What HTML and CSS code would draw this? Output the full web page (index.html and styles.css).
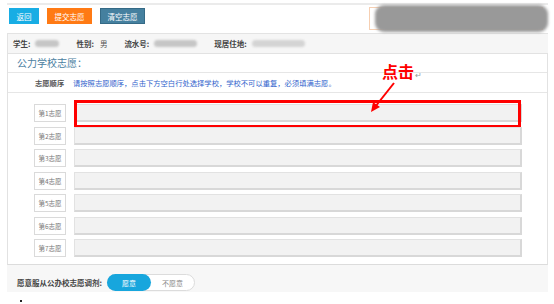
FILE: index.html
```html
<!DOCTYPE html>
<html lang="zh-CN">
<head>
  <meta charset="UTF-8">
  <title>志愿填报</title>
  <link rel="stylesheet" href="styles.css">
</head>
<body>

<div class="page">
  <div class="topline"></div>

  <div class="toolbar">
    <a class="btn btn-back">返回</a>
    <a class="btn btn-submit">提交志愿</a>
    <a class="btn btn-clear">清空志愿</a>
    <div class="school-box">
      <div class="smudge"></div>
    </div>
  </div>

  <div class="info">
    <span class="label">学生:</span><span class="mask mask-name"></span>
    <span class="label gap">性别:</span><span class="value">男</span>
    <span class="label gap">流水号:</span><span class="mask mask-no"></span>
    <span class="label gap">现居住地:</span><span class="mask mask-addr"></span>
  </div>

  <div class="panel">
    <div class="panel-title">公力学校志愿：</div>
    <div class="hint">
      <span class="hint-label">志愿顺序</span>
      <span class="hint-text">请按照志愿顺序，点击下方空白行处选择学校，学校不可以重复，必须填满志愿。</span>
    </div>
    <div class="choices" id="choices">
      <!-- rows filled in below -->
    </div>
  </div>

  <div class="footer">
    <span class="footer-label">愿意服从公办校志愿调剂:</span>
    <div class="toggle">
      <span class="toggle-on">愿意</span>
      <span class="toggle-off">不愿意</span>
    </div>
  </div>
  <div class="dot"></div>
</div>

<!-- screenshot annotation -->
<div class="callout">点击<span class="ret">↵</span></div>
<svg class="arrow" width="40" height="40" viewBox="0 0 40 40">
  <line x1="30" y1="3" x2="11" y2="27" stroke="#f00" stroke-width="2"/>
  <polygon points="7,32 9,22 16,27" fill="#f00"/>
</svg>

<script>
  const rows = document.getElementById("choices");
  for (let i = 1; i <= 7; i++) {
    rows.innerHTML += `
      <div class="choice">
        <span class="choice-no">第${i}志愿</span>
        <div class="choice-input">${i === 1 ? '<div class="highlight"></div>' : ''}</div>
      </div>`;
  }
</script>

</body>
</html>
```

FILE: styles.css
```css
/* General */
body {
  margin: 0;
  background: #fff;
  font-family: "Noto Sans CJK SC", "Noto Sans", sans-serif;
  color: #333;
  position: relative;
}
.page {
  width: 541px;
  margin-left: 7px;
}
.topline {
  height: 2px;
  margin-top: 3px;
  background: #ebebeb;
}

/* Toolbar */
.toolbar {
  display: flex;
  align-items: flex-start;
  height: 28px;
  padding-left: 2px;
}
.btn {
  display: inline-flex;
  align-items: center;
  justify-content: center;
  height: 16px;
  margin-top: 3px;
  margin-right: 8px;
  font-size: 7.5px;
  color: #fff;
  box-sizing: border-box;
}
.btn-back {
  width: 30px;
  background: #18ade4;
}
.btn-submit {
  width: 45px;
  background: #ff7a14;
}
.btn-clear {
  width: 45px;
  background: #45809f;
  border: 1px solid #356a86;
}
.school-box {
  margin-left: auto;
  margin-top: 2px;
  margin-right: 5px;
  width: 172px;
  height: 21px;
  border: 1px solid #f6cfb2;
  position: relative;
}
.smudge {
  position: absolute;
  left: 5px;
  right: -6px;
  top: -3px;
  bottom: -3px;
  background: #999;
  border-radius: 9px;
  filter: blur(1.5px);
}

/* Info row */
.info {
  display: flex;
  align-items: center;
  height: 19px;
  padding-left: 5px;
  border-top: 1px solid #e3e3e3;
  border-left: 1px solid #e3e3e3;
  background: #f6f6f6;
  font-size: 7.5px;
}
.label {
  font-weight: bold;
  color: #444;
}
.gap {
  margin-left: 17px;
}
.value {
  margin-left: 6px;
  color: #555;
}
.mask {
  height: 7px;
  margin-left: 5px;
  background: #c6c6c6;
  border-radius: 4px;
  filter: blur(1px);
}
.mask-name { width: 24px; }
.mask-no { width: 43px; }
.mask-addr { width: 53px; background: #d4d4d4; }

/* Panel */
.panel {
  border: 1px solid #e2e2e2;
  border-bottom-color: #dcdcdc;
  background: #fff;
}
.panel-title {
  height: 18px;
  line-height: 18px;
  padding-left: 9px;
  font-size: 10px;
  color: #4b7ea1;
  border-bottom: 1px solid #e6e6e6;
}
.hint {
  display: flex;
  align-items: center;
  height: 19px;
  border-bottom: 1px solid #e6e6e6;
  font-size: 7.3px;
}
.hint-label {
  width: 38px;
  margin-left: 27px;
  font-weight: bold;
  color: #555;
}
.hint-text {
  color: #2f5fcc;
}
.choices {
  display: flex;
  flex-direction: column;
  gap: 4.5px;
  padding: 11px 25px 7px 26px;
}
.choice {
  display: flex;
  height: 18px;
}
.choice-no {
  display: flex;
  align-items: center;
  justify-content: center;
  width: 32px;
  box-sizing: border-box;
  border: 1px solid #dadada;
  font-size: 6.5px;
  color: #777;
}
.choice-input {
  flex: 1;
  margin-left: 8px;
  background: #f2f2f2;
  border: 1px solid #e2e2e2;
  border-right: 2px solid #d8d8d8;
  border-bottom: 2px solid #d8d8d8;
  position: relative;
}
.highlight {
  position: absolute;
  left: -1px;
  right: -1px;
  top: -5px;
  bottom: -8px;
  border: 3px solid #f00;
}

/* Footer */
.footer {
  display: flex;
  align-items: center;
  height: 19px;
  padding: 8px 0 0 10px;
  background: #f7f7f7;
}
.footer-label {
  font-size: 7.5px;
  font-weight: bold;
  color: #444;
}
.toggle {
  display: flex;
  margin-left: 5px;
  width: 88px;
  height: 17px;
  border: 1px solid #dcdcdc;
  border-radius: 9px;
  background: #fff;
  box-sizing: border-box;
  font-size: 7px;
}
.toggle-on {
  display: flex;
  align-items: center;
  justify-content: center;
  width: 44px;
  margin: -1px 0 -1px -1px;
  border-radius: 9px;
  background: #17a6dd;
  color: #fff;
}
.toggle-off {
  flex: 1;
  display: flex;
  align-items: center;
  justify-content: center;
  color: #888;
}
.dot {
  width: 2px;
  height: 2px;
  margin: 8px 0 0 13px;
  background: #222;
}

/* Annotation */
.callout {
  position: absolute;
  left: 382px;
  top: 60px;
  font-size: 16px;
  font-weight: bold;
  color: #f00;
  line-height: 22px;
}
.ret {
  font-size: 8px;
  font-weight: normal;
  color: #999;
  margin-left: 1px;
}
.arrow {
  position: absolute;
  left: 364px;
  top: 80px;
}
```
